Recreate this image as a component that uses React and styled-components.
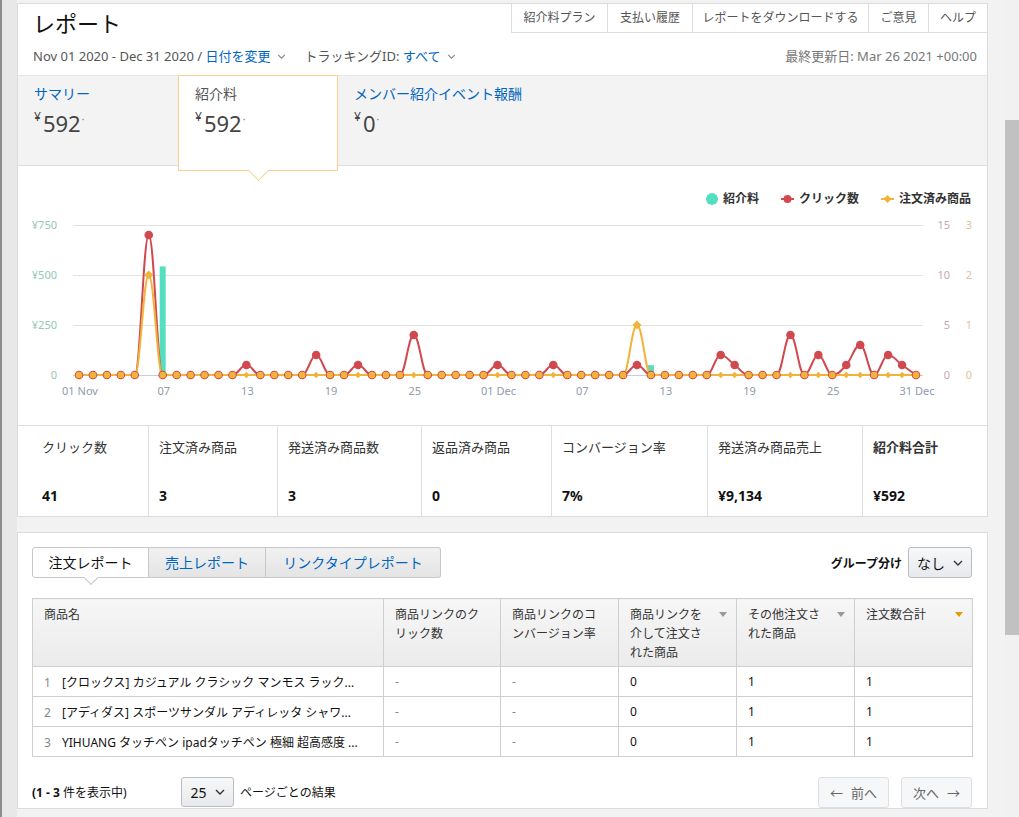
import React from 'react';
import styled, { createGlobalStyle, css } from 'styled-components';

const FONT = `"Noto Sans", "Noto Sans CJK JP", sans-serif`;

const GlobalStyle = createGlobalStyle`
  html, body { margin: 0; padding: 0; }
  body { background: #f2f2f2; font-family: ${FONT}; color: #333; }
  * { box-sizing: border-box; }
`;

const Page = styled.div`
  display: flex;
  width: 1019px;
  height: 817px;
  overflow: hidden;
  background: #f2f2f2;
`;

const LeftRail = styled.div`
  width: 17px;
  flex: none;
  background: #e8e8e8;
  border-left: 2px solid #8e8e8e;
`;

const Main = styled.main`
  width: 971px;
  flex: none;
  padding-top: 3px;
  display: flex;
  flex-direction: column;
`;

const Gutter = styled.div`
  width: 17px;
  flex: none;
`;

const ScrollTrack = styled.div`
  width: 14px;
  flex: none;
  padding-top: 120px;
  background: #f1f1f1;
`;

const ScrollThumb = styled.div`
  height: 515px;
  background: #c1c1c1;
`;

const Card = styled.section`
  background: #fff;
  border: 1px solid #dcdcdc;
  flex: none;
  ${p => p.$spaced && css`margin-top: 15px;`}
`;

/* ---------- header ---------- */
const Header = styled.header`
  padding-bottom: 9px;
`;

const HeaderTop = styled.div`
  display: flex;
  justify-content: space-between;
  align-items: flex-start;
  height: 34px;
`;

const Title = styled.h1`
  margin: 4px 0 0 15px;
  font-size: 22px;
  font-weight: 400;
  line-height: 30px;
  color: #111;
`;

const NavGroup = styled.nav`
  display: flex;
  border-left: 1px solid #ddd;
  border-bottom: 1px solid #ddd;
`;

const NavButton = styled.span`
  width: ${p => p.$w}px;
  height: 28px;
  line-height: 28px;
  text-align: center;
  font-size: 12px;
  color: #555;
  white-space: nowrap;
  & + & { border-left: 1px solid #ddd; }
`;

const SubRow = styled.div`
  display: flex;
  align-items: center;
  justify-content: space-between;
  margin-top: 8px;
  padding: 0 10px 0 15px;
  font-size: 13px;
  line-height: 20px;
  color: #555;
`;

const Filters = styled.div`
  display: flex;
  align-items: center;
`;

const Filter = styled.span`
  display: inline-flex;
  align-items: center;
  white-space: nowrap;
  & + & { margin-left: 18px; }
`;

const Link = styled.span`
  color: #0066c0;
`;

const Updated = styled.span`
  color: #777;
`;

const Chevron = ({ size = 9, color = '#888', gap = 7 }) => (
  <svg width={size} height={Math.round(size * 0.6)} viewBox="0 0 10 6" style={{ marginLeft: gap }}>
    <polyline points="1,1 5,5 9,1" fill="none" stroke={color} strokeWidth="1.4" />
  </svg>
);

/* ---------- summary tabs ---------- */
const TabBand = styled.div`
  display: flex;
  height: 91px;
  background: #f3f3f3;
  border-top: 1px solid #e6e6e6;
  border-bottom: 1px solid #dedede;
`;

const Tab = styled.div`
  width: 160px;
  flex: none;
  padding: 8px 0 0 16px;
  position: relative;
  white-space: nowrap;
  ${p => p.$active && css`
    background: #fff;
    border: 1px solid #f7d18c;
    height: 96px;
    margin-top: -1px;
    padding-top: 8px;
    z-index: 2;
    &::after {
      content: '';
      position: absolute;
      width: 14px;
      height: 14px;
      left: calc(50% - 7px);
      bottom: -8px;
      background: #fff;
      border-right: 1px solid #f7d18c;
      border-bottom: 1px solid #f7d18c;
      transform: rotate(45deg);
    }
  `}
`;

const TabLabel = styled.div`
  font-size: 14px;
  line-height: 20px;
  white-space: nowrap;
  color: ${p => (p.$active ? '#555' : '#0066c0')};
`;

const TabValue = styled.div`
  margin-top: 4px;
  line-height: 30px;
  font-size: 22px;
  color: #444;
  display: flex;
  align-items: flex-start;
`;

const Yen = styled.span`
  font-size: 12px;
  line-height: 16px;
  margin: 1px 2px 0 0;
`;

const Cents = styled.span`
  font-size: 10px;
  line-height: 10px;
  margin: 6px 0 0 1px;
  color: #777;
`;

/* ---------- chart ---------- */
const ChartArea = styled.div`
  height: 259px;
`;

const Legend = styled.div`
  display: flex;
  justify-content: flex-end;
  align-items: center;
  gap: 22px;
  padding: 22px 16px 0 0;
  height: 44px;
  line-height: 20px;
`;

const LegendItem = styled.span`
  display: inline-flex;
  align-items: center;
  gap: 5px;
  font-size: 12px;
  font-weight: 700;
  color: #333;
`;

const ChartSvg = styled.svg`
  display: block;
  font-family: ${FONT};
`;

/* ---------- stats ---------- */
const Stats = styled.div`
  display: grid;
  grid-template-columns: 131px 129px 144px 130px 156px 155px 1fr;
  border-top: 1px solid #dedede;
  height: 91px;
`;

const Stat = styled.div`
  padding: 11px 0 10px ${p => (p.$first ? 24 : 10)}px;
  border-right: 1px solid #dedede;
  &:last-child { border-right: none; }
`;

const StatLabel = styled.div`
  font-size: 13px;
  line-height: 20px;
  color: #333;
  font-weight: ${p => (p.$bold ? 700 : 400)};
`;

const StatValue = styled.div`
  margin-top: 29px;
  font-size: 14px;
  line-height: 20px;
  font-weight: 700;
  color: #111;
`;

/* ---------- report card ---------- */
const ReportBody = styled.div`
  padding: 14px 15px 0 14px;
`;

const Toolbar = styled.div`
  display: flex;
  justify-content: space-between;
  align-items: center;
  height: 31px;
`;

const SegGroup = styled.div`
  display: flex;
  height: 31px;
`;

const SegButton = styled.span`
  position: relative;
  width: ${p => p.$w}px;
  height: 31px;
  line-height: 29px;
  text-align: center;
  font-size: 14px;
  border: 1px solid #c8c8c8;
  color: ${p => (p.$active ? '#111' : '#0066c0')};
  background: ${p => (p.$active ? '#fff' : 'linear-gradient(#f1f1f1, #e4e4e4)')};
  white-space: nowrap;
  & + & { border-left: none; }
  &:first-child { border-radius: 3px 0 0 3px; }
  &:last-child { border-radius: 0 3px 3px 0; }
  ${p => p.$active && css`
    &::after {
      content: '';
      position: absolute;
      width: 9px;
      height: 9px;
      left: calc(50% - 5px);
      bottom: -6px;
      background: #fff;
      border-right: 1px solid #c8c8c8;
      border-bottom: 1px solid #c8c8c8;
      transform: rotate(45deg);
    }
  `}
`;

const GroupBy = styled.div`
  display: flex;
  align-items: center;
  gap: 6px;
  font-size: 12px;
  font-weight: 700;
  color: #111;
`;

const SelectBox = styled.span`
  display: inline-flex;
  align-items: center;
  justify-content: center;
  width: ${p => p.$w}px;
  height: ${p => p.$h}px;
  border: 1px solid #b9bcc1;
  border-radius: 3px;
  background: linear-gradient(#f7f8fa, #e7e9ec);
  font-size: 14px;
  font-weight: 400;
  color: #111;
`;

const Table = styled.table`
  margin-top: 20px;
  width: 940px;
  table-layout: fixed;
  border-collapse: collapse;
  font-size: 12px;
`;

const Th = styled.th`
  height: 68px;
  padding: 6px 9px 0 11px;
  border: 1px solid #cfcfcf;
  background: linear-gradient(#f6f6f6, #ebebeb);
  text-align: left;
  vertical-align: top;
  font-weight: 400;
  line-height: 19px;
  color: #333;
`;

const ThInner = styled.div`
  display: flex;
  justify-content: space-between;
  align-items: flex-start;
`;

const SortArrow = styled.span`
  flex: none;
  margin-top: 7px;
  width: 0;
  height: 0;
  border-left: 4px solid transparent;
  border-right: 4px solid transparent;
  border-top: 5px solid ${p => (p.$on ? '#e39b00' : '#9a9a9a')};
`;

const Td = styled.td`
  height: 30px;
  padding: 0 11px;
  border: 1px solid #cfcfcf;
  color: ${p => (p.$muted ? '#888' : '#111')};
  white-space: nowrap;
  overflow: hidden;
  text-overflow: ellipsis;
`;

const RowIndex = styled.span`
  display: inline-block;
  width: 18px;
  color: #888;
`;

const Pager = styled.div`
  margin-top: 19px;
  display: flex;
  justify-content: space-between;
  align-items: center;
  height: 32px;
`;

const PagerLeft = styled.div`
  display: flex;
  align-items: center;
  font-size: 12px;
  color: #111;
`;

const Showing = styled.span`
  width: 149px;
  b { font-weight: 700; }
`;

const PerPage = styled.span`
  margin-left: 6px;
`;

const PagerButtons = styled.div`
  display: flex;
  gap: 12px;
`;

const PageButton = styled.span`
  display: inline-flex;
  align-items: center;
  justify-content: center;
  gap: 8px;
  width: 71px;
  height: 31px;
  border: 1px solid #dcdfe3;
  border-radius: 3px;
  background: #f6f7f9;
  font-size: 13px;
  color: #666;
`;

/* ---------- data ---------- */
const clicks = Array(61).fill(0);
Object.entries({ 5: 14, 12: 1, 17: 2, 20: 1, 24: 4, 30: 1, 34: 1, 40: 1, 46: 2, 47: 1, 51: 4, 53: 2, 55: 1, 56: 3, 58: 2, 59: 1 })
  .forEach(([k, v]) => { clicks[k] = v; });
const orders = Array(61).fill(0);
orders[5] = 2;
orders[40] = 1;
const bars = [{ i: 6, v: 543 }, { i: 41, v: 49 }];

const X = i => 79 + i * 13.95;
const BASE = 375;

function spline(pts) {
  const n = pts.length;
  const L = [], R = [];
  const s = 1.5, d = s + 1;
  for (let i = 0; i < n; i++) {
    if (i === 0 || i === n - 1) { L[i] = pts[i]; R[i] = pts[i]; continue; }
    const [x, y] = pts[i];
    const [lx, ly] = pts[i - 1];
    const [nx, ny] = pts[i + 1];
    const lcx = (s * x + lx) / d;
    let lcy = (s * y + ly) / d;
    const rcx = (s * x + nx) / d;
    let rcy = (s * y + ny) / d;
    if (rcx !== lcx) {
      const c = ((rcy - lcy) * (rcx - x)) / (rcx - lcx) + y - rcy;
      lcy += c; rcy += c;
    }
    if (lcy > Math.max(ly, y)) { lcy = Math.max(ly, y); rcy = 2 * y - lcy; }
    else if (lcy < Math.min(ly, y)) { lcy = Math.min(ly, y); rcy = 2 * y - lcy; }
    if (rcy > Math.max(ny, y)) { rcy = Math.max(ny, y); lcy = 2 * y - rcy; }
    else if (rcy < Math.min(ny, y)) { rcy = Math.min(ny, y); lcy = 2 * y - rcy; }
    L[i] = [lcx, lcy]; R[i] = [rcx, rcy];
  }
  let dStr = `M${pts[0][0]},${pts[0][1]}`;
  for (let i = 1; i < n; i++) {
    dStr += ` C${R[i - 1][0]},${R[i - 1][1]} ${L[i][0]},${L[i][1]} ${pts[i][0]},${pts[i][1]}`;
  }
  return dStr;
}

const RED = '#d0494f';
const YEL = '#f1b43b';
const TEAL = '#55dfc1';

const diamond = (x, y, r) => `${x},${y - r} ${x + r},${y} ${x},${y + r} ${x - r},${y}`;

function Chart() {
  const cPts = clicks.map((v, i) => [X(i), BASE - v * 10]);
  const oPts = orders.map((v, i) => [X(i), BASE - v * 50]);
  const leftLabels = [['¥750', 225], ['¥500', 275], ['¥250', 325], ['0', 375]];
  const r1 = [['15', 225], ['10', 275], ['5', 325], ['0', 375]];
  const r2 = [['3', 225], ['2', 275], ['1', 325], ['0', 375]];
  const xl = ['01 Nov', '07', '13', '19', '25', '01 Dec', '07', '13', '19', '25', '31 Dec'];
  return (
    <ChartSvg width="969" height="200" viewBox="18 210 969 200">
      {[225, 275, 325].map(y => (
        <line key={y} x1="73" x2="923" y1={y + 0.5} y2={y + 0.5} stroke="#e2e2e2" />
      ))}
      <line x1="73" x2="923" y1={BASE + 0.5} y2={BASE + 0.5} stroke="#c6cddb" />
      {leftLabels.map(([t, y]) => (
        <text key={t} x="57" y={y + 4} textAnchor="end" fontSize="11" fill="#94c8b4">{t}</text>
      ))}
      {r1.map(([t, y]) => (
        <text key={t} x="950" y={y + 4} textAnchor="end" fontSize="11" fill="#c7a9ad">{t}</text>
      ))}
      {r2.map(([t, y]) => (
        <text key={t} x="972" y={y + 4} textAnchor="end" fontSize="11" fill="#dfc39c">{t}</text>
      ))}
      {xl.map((t, k) => (
        <text key={k} x={X(k * 6) + 1} y="395" textAnchor="middle" fontSize="11" fill="#8f9aae">{t}</text>
      ))}
      {bars.map(b => (
        <rect key={b.i} x={X(b.i) - 3} y={BASE - b.v * 0.2} width="6" height={b.v * 0.2} fill={TEAL} />
      ))}
      <path d={spline(cPts)} fill="none" stroke={RED} strokeWidth="2" />
      <path d={spline(oPts)} fill="none" stroke={YEL} strokeWidth="2" />
      {cPts.map(([x, y], i) => (
        <circle key={i} cx={x} cy={y} r="4.3" fill={RED} />
      ))}
      {oPts.map(([x, y], i) => (
        clicks[i] === 0 && orders[i] === 0
          ? <circle key={i} cx={x} cy={y} r="3.3" fill={YEL} />
          : <polygon key={i} points={diamond(x, y, orders[i] > 0 ? 4.5 : 3.2)} fill={YEL} />
      ))}
    </ChartSvg>
  );
}

const LegendDot = () => (
  <svg width="12" height="12" viewBox="0 0 12 12"><circle cx="6" cy="6" r="6" fill={TEAL} /></svg>
);
const LegendLine = ({ color, shape }) => (
  <svg width="13" height="10" viewBox="0 0 13 10">
    <line x1="0" x2="13" y1="5" y2="5" stroke={color} strokeWidth="2" />
    {shape === 'circle'
      ? <circle cx="6.5" cy="5" r="4" fill={color} />
      : <polygon points={diamond(6.5, 5, 4)} fill={color} />}
  </svg>
);

const stats = [
  ['クリック数', '41'],
  ['注文済み商品', '3'],
  ['発送済み商品数', '3'],
  ['返品済み商品', '0'],
  ['コンバージョン率', '7%'],
  ['発送済み商品売上', '¥9,134'],
  ['紹介料合計', '¥592', true],
];

const rows = [
  ['1', '[クロックス] カジュアル クラシック マンモス ラック...'],
  ['2', '[アディダス] スポーツサンダル アディレッタ シャワ...'],
  ['3', 'YIHUANG タッチペン ipadタッチペン 極細 超高感度 ...'],
];

export default function App() {
  return (
    <>
      <GlobalStyle />
      <Page>
        <LeftRail />
        <Main>
          <Card>
            <Header>
              <HeaderTop>
                <Title>レポート</Title>
                <NavGroup>
                  <NavButton $w={95}>紹介料プラン</NavButton>
                  <NavButton $w={85}>支払い履歴</NavButton>
                  <NavButton $w={176}>レポートをダウンロードする</NavButton>
                  <NavButton $w={60}>ご意見</NavButton>
                  <NavButton $w={59}>ヘルプ</NavButton>
                </NavGroup>
              </HeaderTop>
              <SubRow>
                <Filters>
                  <Filter>
                    Nov 01 2020 - Dec 31 2020 /&nbsp;<Link>日付を変更</Link>
                    <Chevron />
                  </Filter>
                  <Filter>
                    トラッキングID:&nbsp;<Link>すべて</Link>
                    <Chevron />
                  </Filter>
                </Filters>
                <Updated>最終更新日: Mar 26 2021 +00:00</Updated>
              </SubRow>
            </Header>

            <TabBand>
              <Tab>
                <TabLabel>サマリー</TabLabel>
                <TabValue><Yen>¥</Yen>592<Cents>·</Cents></TabValue>
              </Tab>
              <Tab $active>
                <TabLabel $active>紹介料</TabLabel>
                <TabValue><Yen>¥</Yen>592<Cents>·</Cents></TabValue>
              </Tab>
              <Tab>
                <TabLabel>メンバー紹介イベント報酬</TabLabel>
                <TabValue><Yen>¥</Yen>0<Cents>·</Cents></TabValue>
              </Tab>
            </TabBand>

            <ChartArea>
              <Legend>
                <LegendItem><LegendDot />紹介料</LegendItem>
                <LegendItem><LegendLine color={RED} shape="circle" />クリック数</LegendItem>
                <LegendItem><LegendLine color={YEL} shape="diamond" />注文済み商品</LegendItem>
              </Legend>
              <Chart />
            </ChartArea>

            <Stats>
              {stats.map(([label, value, bold], i) => (
                <Stat key={label} $first={i === 0}>
                  <StatLabel $bold={bold}>{label}</StatLabel>
                  <StatValue>{value}</StatValue>
                </Stat>
              ))}
            </Stats>
          </Card>

          <Card $spaced>
            <ReportBody>
              <Toolbar>
                <SegGroup>
                  <SegButton $w={117} $active>注文レポート</SegButton>
                  <SegButton $w={117}>売上レポート</SegButton>
                  <SegButton $w={175}>リンクタイプレポート</SegButton>
                </SegGroup>
                <GroupBy>
                  グループ分け
                  <SelectBox $w={64} $h={31}>なし<Chevron size={10} color="#333" gap={8} /></SelectBox>
                </GroupBy>
              </Toolbar>

              <Table>
                <colgroup>
                  <col style={{ width: 351 }} />
                  <col style={{ width: 117 }} />
                  <col style={{ width: 118 }} />
                  <col style={{ width: 118 }} />
                  <col style={{ width: 118 }} />
                  <col style={{ width: 118 }} />
                </colgroup>
                <thead>
                  <tr>
                    <Th>商品名</Th>
                    <Th>商品リンクのク<br />リック数</Th>
                    <Th>商品リンクのコ<br />ンバージョン率</Th>
                    <Th><ThInner><span>商品リンクを<br />介して注文さ<br />れた商品</span><SortArrow /></ThInner></Th>
                    <Th><ThInner><span>その他注文さ<br />れた商品</span><SortArrow /></ThInner></Th>
                    <Th><ThInner><span>注文数合計</span><SortArrow $on /></ThInner></Th>
                  </tr>
                </thead>
                <tbody>
                  {rows.map(([n, name]) => (
                    <tr key={n}>
                      <Td><RowIndex>{n}</RowIndex>{name}</Td>
                      <Td $muted>-</Td>
                      <Td $muted>-</Td>
                      <Td>0</Td>
                      <Td>1</Td>
                      <Td>1</Td>
                    </tr>
                  ))}
                </tbody>
              </Table>

              <Pager>
                <PagerLeft>
                  <Showing><b>(1 - 3</b> 件を表示中)</Showing>
                  <SelectBox $w={53} $h={30}>25<Chevron size={10} color="#333" gap={8} /></SelectBox>
                  <PerPage>ページごとの結果</PerPage>
                </PagerLeft>
                <PagerButtons>
                  <PageButton><span>←</span><span>前へ</span></PageButton>
                  <PageButton><span>次へ</span><span>→</span></PageButton>
                </PagerButtons>
              </Pager>
            </ReportBody>
          </Card>
        </Main>
        <Gutter />
        <ScrollTrack><ScrollThumb /></ScrollTrack>
      </Page>
    </>
  );
}
